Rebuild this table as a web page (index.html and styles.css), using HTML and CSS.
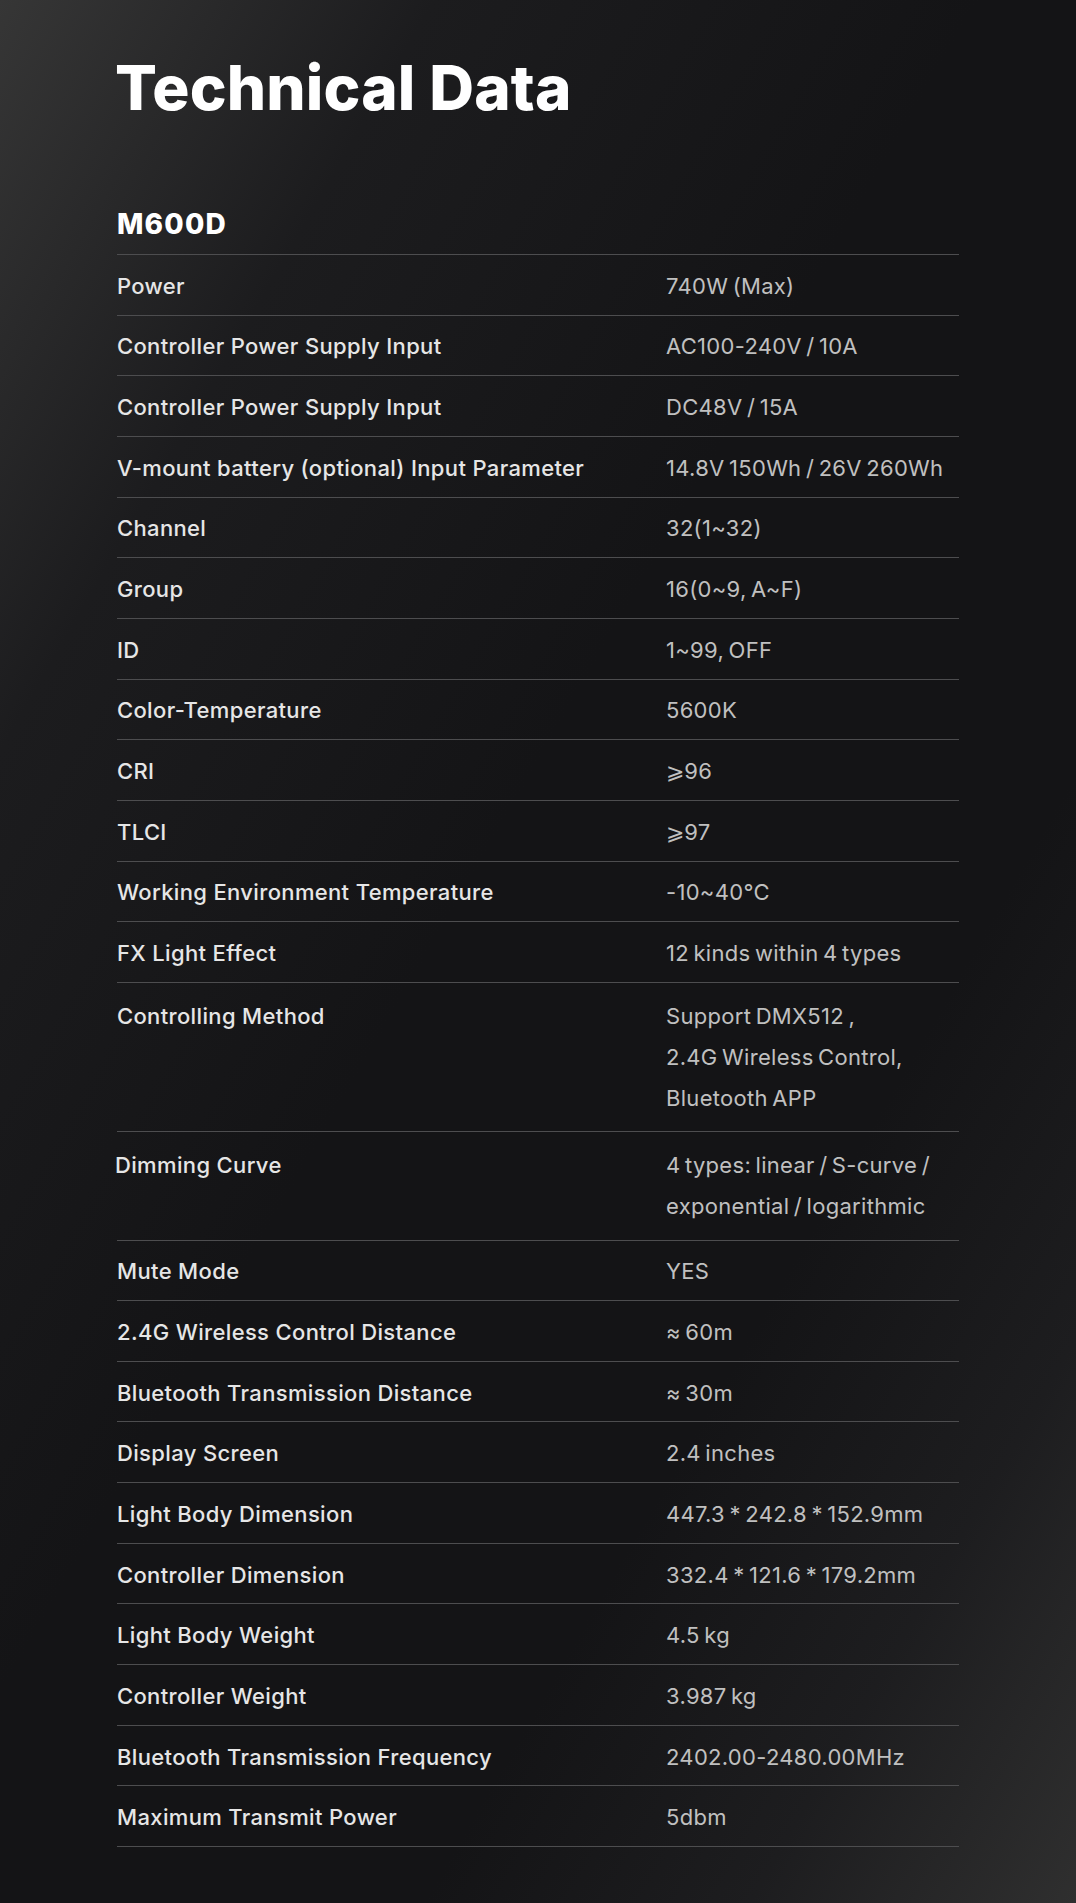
FILE: index.html
```html
<!DOCTYPE html>
<html lang="en">
<head>
<meta charset="utf-8">
<title>Technical Data</title>
<link rel="stylesheet" href="styles.css">
</head>
<body>
<main class="page">
  <h1 class="title">Technical Data</h1>
  <h2 class="model">M600D</h2>
  <div class="specs">
    <div class="row"><div class="label">Power</div><div class="value">740W (Max)</div></div>
    <div class="row"><div class="label">Controller Power Supply Input</div><div class="value">AC100-240V / 10A</div></div>
    <div class="row"><div class="label">Controller Power Supply Input</div><div class="value">DC48V / 15A</div></div>
    <div class="row"><div class="label">V-mount battery (optional) Input Parameter</div><div class="value">14.8V 150Wh / 26V 260Wh</div></div>
    <div class="row"><div class="label">Channel</div><div class="value">32(1~32)</div></div>
    <div class="row"><div class="label">Group</div><div class="value">16(0~9, A~F)</div></div>
    <div class="row"><div class="label">ID</div><div class="value">1~99, OFF</div></div>
    <div class="row"><div class="label">Color-Temperature</div><div class="value">5600K</div></div>
    <div class="row"><div class="label">CRI</div><div class="value">⩾96</div></div>
    <div class="row"><div class="label">TLCI</div><div class="value">⩾97</div></div>
    <div class="row"><div class="label">Working Environment Temperature</div><div class="value">-10~40°C</div></div>
    <div class="row"><div class="label">FX Light Effect</div><div class="value">12 kinds within 4 types</div></div>
    <div class="row multi"><div class="label">Controlling Method</div><div class="value">Support DMX512 ,<br>2.4G Wireless Control,<br>Bluetooth APP</div></div>
    <div class="row multi"><div class="label label-shift">Dimming Curve</div><div class="value">4 types: linear / S-curve /<br>exponential / logarithmic</div></div>
    <div class="row"><div class="label">Mute Mode</div><div class="value">YES</div></div>
    <div class="row"><div class="label">2.4G Wireless Control Distance</div><div class="value">≈ 60m</div></div>
    <div class="row"><div class="label">Bluetooth Transmission Distance</div><div class="value">≈ 30m</div></div>
    <div class="row"><div class="label">Display Screen</div><div class="value">2.4 inches</div></div>
    <div class="row"><div class="label">Light Body Dimension</div><div class="value">447.3 * 242.8 * 152.9mm</div></div>
    <div class="row"><div class="label">Controller Dimension</div><div class="value">332.4 * 121.6 * 179.2mm</div></div>
    <div class="row"><div class="label">Light Body Weight</div><div class="value">4.5 kg</div></div>
    <div class="row"><div class="label">Controller Weight</div><div class="value">3.987 kg</div></div>
    <div class="row"><div class="label">Bluetooth Transmission Frequency</div><div class="value">2402.00-2480.00MHz</div></div>
    <div class="row"><div class="label">Maximum Transmit Power</div><div class="value">5dbm</div></div>
  </div>
</main>
</body>
</html>
```

FILE: styles.css
```css
html {
  background: #141416;
}
body {
  margin: 0;
  min-height: 1903px;
  background: linear-gradient(120deg, #363636 0%, #1c1c1e 20%, #141416 45%, #141416 70%, #1d1d1f 85%, #2f2f2f 100%);
  font-family: "Inter", "Liberation Sans", sans-serif;
  color: #e8e8e8;
}
.page {
  width: 842px;
  margin-left: 117px;
  padding-top: 51px;
}
.title {
  margin: 0 0 0 -2px;
  font-size: 62px;
  line-height: 1.2;
  font-weight: 800;
  color: #ffffff;
  letter-spacing: 0.15px;
}
.model {
  margin: 83px 0 12px;
  font-size: 28px;
  line-height: 1.2;
  font-weight: 800;
  color: #ffffff;
  letter-spacing: 1.2px;
}
.specs {
  border-top: 1px solid #4d4d4f;
}
.row {
  display: grid;
  grid-template-columns: 549px 1fr;
  padding: 10.83px 0 7.83px;
  border-bottom: 1px solid #4d4d4f;
  font-size: 22px;
  line-height: 41px;
}
.row.multi {
  padding: 12.83px 0 12.5px;
}
.label {
  color: #e6e6e6;
  font-weight: 500;
  letter-spacing: 0.35px;
}
.label-shift {
  margin-left: -2px;
}
.value {
  color: #c0c0c0;
  font-weight: 400;
  letter-spacing: 0.3px;
  word-spacing: -2px;
}
```
